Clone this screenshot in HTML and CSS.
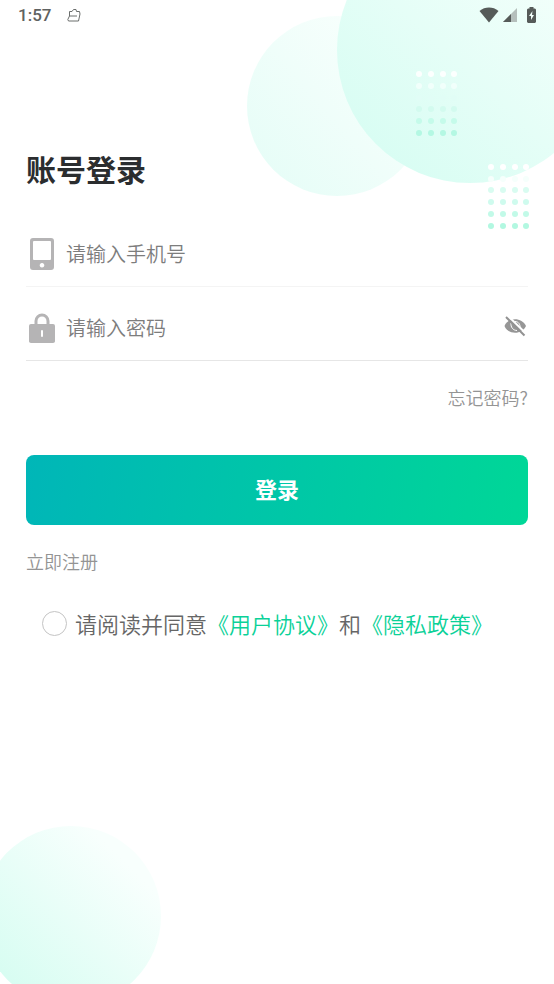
FILE: index.html
```html
<!DOCTYPE html>
<html lang="zh-CN">
<head>
<meta charset="utf-8">
<meta name="viewport" content="width=device-width, initial-scale=1">
<title>账号登录</title>
<link rel="stylesheet" href="styles.css">
</head>
<body>
<svg class="decor decor-top" width="308" height="240" viewBox="246 0 308 240" aria-hidden="true">
  <defs>
    <linearGradient id="small" x1="0" y1="0.8" x2="0.8" y2="0.1">
      <stop offset="0" stop-color="#e6fdf7"/><stop offset="1" stop-color="#f9fffd"/>
    </linearGradient>
    <linearGradient id="big" x1="0.1" y1="0.85" x2="0.75" y2="0.15">
      <stop offset="0" stop-color="#d8fdf3"/><stop offset="1" stop-color="#f3fffb"/>
    </linearGradient>
    <g id="row">
      <circle r="3"/><circle cx="12" r="3"/><circle cx="24" r="3"/><circle cx="35" r="3"/>
    </g>
  </defs>
  <circle cx="337" cy="106" r="90" fill="url(#small)"/>
  <circle cx="470" cy="50" r="133" fill="url(#big)"/>
  <use href="#row" x="419" y="74" fill="#fcfffe"/>
  <use href="#row" x="419" y="86" fill="#f1fffb"/>
  <use href="#row" x="419" y="98" fill="#e1fdf6"/>
  <use href="#row" x="419" y="109" fill="#d3fbef"/>
  <use href="#row" x="419" y="121" fill="#c5fbea"/>
  <use href="#row" x="419" y="133" fill="#b4f8e3"/>
  <use href="#row" x="491" y="167" fill="#ffffff"/>
  <use href="#row" x="491" y="179" fill="#f6fffc"/>
  <use href="#row" x="491" y="190" fill="#d9fcf1"/>
  <use href="#row" x="491" y="202" fill="#cffbee"/>
  <use href="#row" x="491" y="214" fill="#c2fae8"/>
  <use href="#row" x="491" y="226" fill="#b2f8e1"/>
</svg>
<svg class="decor decor-bottom" width="162" height="160" viewBox="0 824 162 160" aria-hidden="true">
  <defs>
    <linearGradient id="low" x1="0.1" y1="0.8" x2="0.75" y2="0.15">
      <stop offset="0" stop-color="#d8fdf2"/><stop offset="1" stop-color="#f8fffd"/>
    </linearGradient>
  </defs>
  <circle cx="71" cy="916" r="90" fill="url(#low)"/>
</svg>

<header class="status">
  <time class="clock">1:57</time>
  <svg width="14" height="15" viewBox="0 0 14 15" fill="none" stroke="#6b6e6d" stroke-width="1" stroke-linejoin="round" aria-hidden="true">
    <path d="M2.500 8V3.500H5L6.500 1.500H9L9.500 3.500H12.500L13 6L11.500 13H1.500L.8 11.500L2.500 8H10"/>
  </svg>
  <span class="signals">
    <svg width="20" height="16" viewBox="0 0 20 16" aria-hidden="true"><path d="M.5 4C6-.6 14-.6 19.500 4L10 15.500Z" fill="#565b59"/></svg>
    <svg width="14" height="14" viewBox="0 0 14 14" aria-hidden="true"><path d="M14 0V14H0Z" fill="#b5bfbc"/><path d="M8 6V14H0Z" fill="#565b59"/></svg>
    <svg class="battery" width="9" height="16" viewBox="0 0 9 16" aria-hidden="true"><path d="M2.500 0H6.500V1.500H8L9 2.500V15L8 16H1L0 15V2.500L1 1.500H2.500Z" fill="#565b59"/><path d="M5.500 4L2 9H4V13L7 8H5Z" fill="#f3fffb"/></svg>
  </span>
</header>

<main class="page">
  <h1>账号登录</h1>
  <form>
    <div class="field">
      <label for="phone" aria-label="手机号">
        <svg width="32" height="34" viewBox="0 0 32 34"><path fill="#b5b4b5" fill-rule="evenodd" d="M7 1H25Q28 1 28 4V30Q28 33 25 33H7Q4 33 4 30V4Q4 1 7 1ZM8 4Q7 4 7 5V22Q7 23 8 23H24Q25 23 25 22V5Q25 4 24 4ZM16 26a2.300 2.300 0 1 0 .01 0Z"/></svg>
      </label>
      <input id="phone" type="tel" placeholder="请输入手机号">
    </div>
    <div class="field">
      <label for="password" aria-label="密码">
        <svg width="32" height="34" viewBox="0 0 32 34"><path d="M10 15V10a6 6 0 0 1 12 0V15" fill="none" stroke="#b5b4b5" stroke-width="3"/><rect x="3" y="13" width="26" height="19" rx="2" fill="#b5b4b5"/><rect x="15" y="19" width="2" height="7" rx="1" fill="#fff"/></svg>
      </label>
      <input id="password" type="password" placeholder="请输入密码">
      <button class="reveal" type="button" aria-label="显示密码">
        <svg width="24" height="28" viewBox="0 0 24 28"><path d="M0.500 12C4 3 18 3 22 12C18 21 4 21 .5 12Z" fill="#969696"/><path d="M7 9C6.500 13 9 16.500 13 16.500M11 7.500C14.500 7.500 16.500 10.500 16 14" fill="none" stroke="#fff" stroke-width="1"/><path d="M3.500 1.500L22.500 20" stroke="#fff" stroke-width="2"/><path d="M2 3L20.500 21.500" stroke="#929292" stroke-width="2"/></svg>
      </button>
    </div>
    <a class="link forgot" href="#forgot">忘记密码?</a>
    <button class="submit" type="submit">登录</button>
    <a class="link register" href="#register">立即注册</a>
    <div class="agree">
      <input id="agree" type="checkbox">
      <label for="agree">请阅读并同意<a href="#terms">《用户协议》</a>和<a href="#privacy">《隐私政策》</a></label>
    </div>
  </form>
</main>
</body>
</html>
```
FILE: styles.css
```css
* {
  box-sizing: border-box;
}

body {
  position: relative;
  min-height: 100vh;
  margin: 0;
  background: #fff;
  color: #666;
  font-family: "Noto Sans CJK SC", sans-serif;
  font-weight: 350;
}

svg {
  display: block;
}

a {
  text-decoration: none;
}

.decor {
  position: absolute;
  z-index: -1;
}

.decor-top {
  top: 0;
  right: 0;
}

.decor-bottom {
  bottom: 0;
  left: 0;
}

.status {
  display: flex;
  align-items: center;
  gap: 16px;
  height: 30px;
  padding: 0 18px;
}

.clock {
  color: #5f6261;
  font: 500 17px/30px Roboto, sans-serif;
}

.signals {
  display: flex;
  align-items: center;
  gap: 4px;
  margin-left: auto;
}

.battery {
  margin-left: 6px;
}

.page {
  padding: 116px 26px 32px;
}

h1 {
  margin: 0 0 32px;
  color: #2b2d2f;
  font-size: 30px;
  font-weight: 700;
  line-height: 44px;
}

form {
  display: flex;
  flex-direction: column;
}

.field {
  display: flex;
  align-items: center;
  gap: 8px;
  height: 65px;
  border-bottom: 1px solid #f4f4f4;
}

.field + .field {
  height: 74px;
  padding-top: 8px;
  border-color: #e6e6e6;
}

.field input {
  flex: 1;
  min-width: 0;
  padding: 0;
  border: 0;
  outline: 0;
  background: none;
  color: #333;
  font: 350 20px/32px "Noto Sans CJK SC", sans-serif;
}

.field input::placeholder {
  color: #7d7d7d;
  opacity: 1;
}

.reveal {
  padding: 0;
  border: 0;
  background: none;
}

.link {
  color: #949494;
  font-size: 18px;
  line-height: 28px;
}

.forgot {
  align-self: flex-end;
  margin-top: 22px;
}

.submit {
  height: 70px;
  margin: 44px 0 22px;
  padding: 0 0 4px;
  border: 0;
  border-radius: 8px;
  background: linear-gradient(100deg, #00b6b8, #00d797);
  color: #fff;
  font: 700 22px/32px "Noto Sans CJK SC", sans-serif;
}

.register {
  align-self: flex-start;
}

.agree {
  display: flex;
  align-items: center;
  gap: 8px;
  margin: 32px 0 0 16px;
  font-size: 22px;
  line-height: 32px;
}

.agree input {
  flex: none;
  width: 25px;
  height: 25px;
  margin: 0;
  border: 1px solid #c4c4c4;
  border-radius: 50%;
  appearance: none;
  background: #fff;
}

.agree input:checked {
  border-color: #00d797;
  background: #00d797;
}

.agree a {
  color: #0bd198;
}
```
